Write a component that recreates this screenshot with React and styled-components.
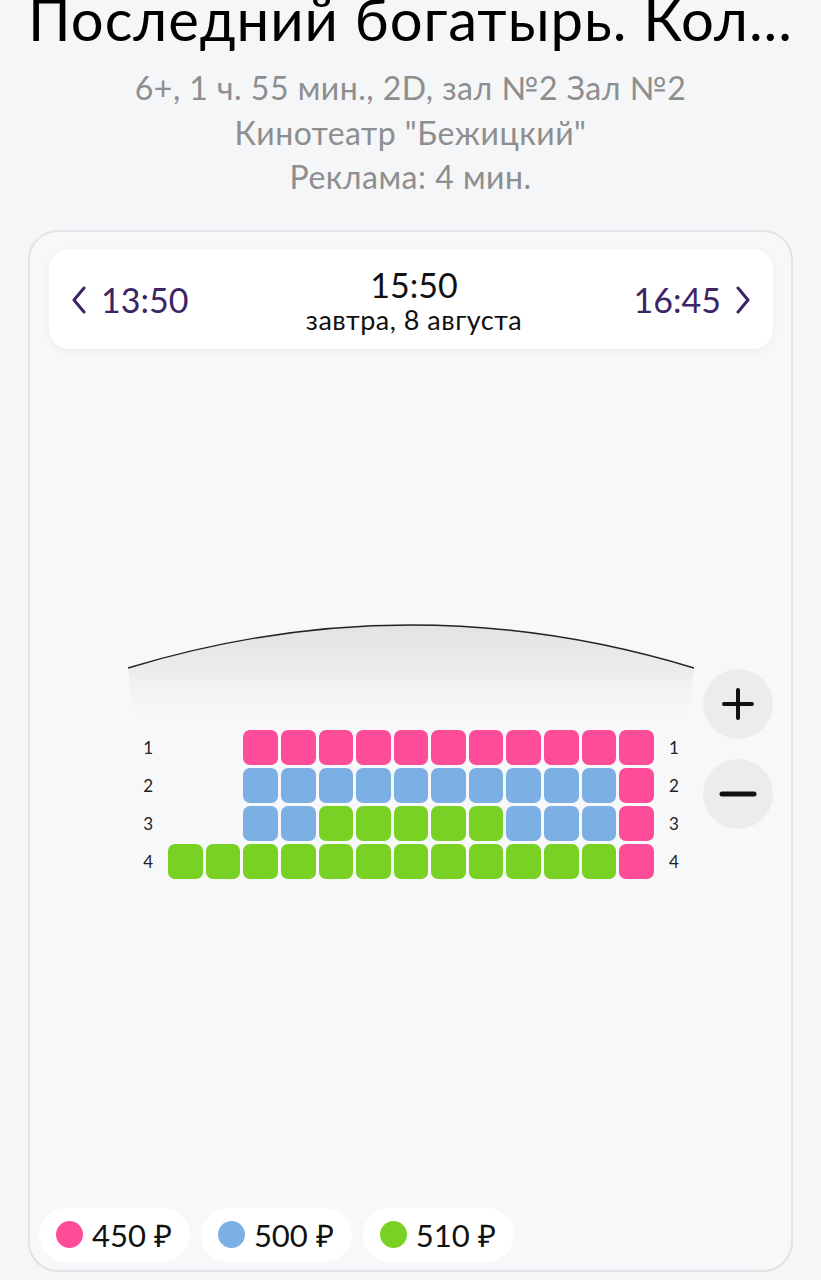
import React from 'react';
import styled, {createGlobalStyle} from 'styled-components';

const GlobalStyle = createGlobalStyle`
  body {
    margin: 0;
    background: #f5f6f8;
    font-family: Lato, "Open Sans", sans-serif;
  }
`;

const P = 'pink';
const B = 'blue';
const G = 'green';
const _ = null;

const rows = [
  [_, _, P, P, P, P, P, P, P, P, P, P, P],
  [_, _, B, B, B, B, B, B, B, B, B, B, P],
  [_, _, B, B, G, G, G, G, G, B, B, B, P],
  [G, G, G, G, G, G, G, G, G, G, G, G, P],
];

const colors = {
  pink: '#fd4d99',
  blue: '#7cafe3',
  green: '#79d123',
};

const prices = [
  {color: 'pink', label: '450 ₽'},
  {color: 'blue', label: '500 ₽'},
  {color: 'green', label: '510 ₽'},
];

const Chevron = ({dir}) => (
  <svg width="16" height="28" viewBox="0 0 16 28">
    <polyline
      points={dir === 'left' ? '13,2 3,14 13,26' : '3,2 13,14 3,26'}
      fill="none"
      stroke="#3d2465"
      strokeWidth="3"
      strokeLinecap="round"
      strokeLinejoin="round"
    />
  </svg>
);

// screen arc with the soft light falling down onto the hall
const ScreenShape = () => (
  <svg width="568" height="104" viewBox="0 0 568 104">
    <defs>
      <linearGradient id="glow" x1="0" y1="0" x2="0" y2="1">
        <stop offset="0" stopColor="#e2e3e5" />
        <stop offset="0.45" stopColor="#ebecee" />
        <stop offset="1" stopColor="#f7f8fa" stopOpacity="0" />
      </linearGradient>
    </defs>
    <path d="M1 44 Q284 -42 567 44 L560 104 L8 104 Z" fill="url(#glow)" />
    <path d="M1 44 Q284 -42 567 44" fill="none" stroke="#222" strokeWidth="1.4" />
  </svg>
);

const App = () => {
  return (
    <Page>
      <GlobalStyle />
      <Title>Последний богатырь. Кол...</Title>
      <Info>
        <div>6+, 1 ч. 55 мин., 2D, зал №2 Зал №2</div>
        <div>Кинотеатр "Бежицкий"</div>
        <div>Реклама: 4 мин.</div>
      </Info>
      <Card>
        <SessionNav>
          <SideTime>
            <Chevron dir="left" />
            13:50
          </SideTime>
          <Current>
            <CurrentTime>15:50</CurrentTime>
            <CurrentDate>завтра, 8 августа</CurrentDate>
          </Current>
          <SideTime>
            16:45
            <Chevron dir="right" />
          </SideTime>
        </SessionNav>

        <MapArea>
          <Stage>
            <ScreenShape />
            <Rows>
              {rows.map((row, i) => (
                <RowLine key={i}>
                  <RowNum>{i + 1}</RowNum>
                  <Seats>
                    {row.map((s, j) =>
                      s ? <Seat key={j} $color={colors[s]} /> : <Gap key={j} />
                    )}
                  </Seats>
                  <RowNum>{i + 1}</RowNum>
                </RowLine>
              ))}
            </Rows>
          </Stage>
          <Zoom>
            <ZoomButton>
              <svg width="34" height="34" viewBox="0 0 34 34">
                <path d="M17 3 V31 M3 17 H31" stroke="#111" strokeWidth="4" strokeLinecap="round" />
              </svg>
            </ZoomButton>
            <ZoomButton>
              <svg width="38" height="34" viewBox="0 0 38 34">
                <path d="M3 17 H35" stroke="#111" strokeWidth="5" strokeLinecap="round" />
              </svg>
            </ZoomButton>
          </Zoom>
        </MapArea>

        <Legend>
          {prices.map((p) => (
            <PricePill key={p.label}>
              <Dot $color={colors[p.color]} />
              {p.label}
            </PricePill>
          ))}
        </Legend>
      </Card>
    </Page>
  );
};
export default App;

const Page = styled.div`
  width: 821px;
  height: 1280px;
  overflow: hidden;
  box-sizing: border-box;
  padding: 0 28px;
`;

const Title = styled.h1`
  margin: -14px -28px 0;
  font-size: 58px;
  line-height: 66px;
  letter-spacing: 1px;
  font-weight: 400;
  color: #000;
  text-align: center;
  white-space: nowrap;
`;

const Info = styled.div`
  margin-top: 14px;
  font-size: 32px;
  line-height: 44.5px;
  letter-spacing: 0.5px;
  color: #8e8e8e;
  text-align: center;
`;

const Card = styled.div`
  margin-top: 30px;
  height: 1042px;
  box-sizing: border-box;
  border: 2px solid #e2e3e6;
  border-radius: 30px;
  background: #f7f8fa;
  padding: 17px 18px 8px 9px;
  display: flex;
  flex-direction: column;
`;

const SessionNav = styled.div`
  margin-left: 10px;
  height: 100px;
  background: #fff;
  border-radius: 20px;
  box-shadow: 0 2px 8px rgba(0, 0, 0, 0.05);
  display: flex;
  align-items: center;
  justify-content: space-between;
  padding: 0 22px;
`;

const SideTime = styled.div`
  display: flex;
  align-items: center;
  gap: 14px;
  font-size: 34px;
  color: #3d2465;
  padding-top: 2px;
`;

const Current = styled.div`
  display: flex;
  flex-direction: column;
  align-items: center;
  margin-left: 6px;
  padding-top: 4px;
`;

const CurrentTime = styled.div`
  font-size: 34px;
  line-height: 38px;
  color: #111;
`;

const CurrentDate = styled.div`
  font-size: 27px;
  line-height: 32px;
  letter-spacing: 0.5px;
  color: #111;
`;

const MapArea = styled.div`
  flex: 1;
  position: relative;
  display: flex;
  justify-content: center;
  padding-top: 275px;
  padding-left: 10px;
`;

const Stage = styled.div`
  display: flex;
  flex-direction: column;
  align-items: center;
`;

const Rows = styled.div`
  display: flex;
  flex-direction: column;
  gap: 3px;
  margin-top: 2px;
`;

const RowLine = styled.div`
  display: flex;
  align-items: center;
  gap: 10px;
`;

const RowNum = styled.div`
  width: 20px;
  text-align: center;
  font-size: 17px;
  color: #222;
`;

const Seats = styled.div`
  display: flex;
  gap: 3px;
`;

const Seat = styled.div`
  width: 34.6px;
  height: 35px;
  border-radius: 7px;
  background: ${(p) => p.$color};
`;

const Gap = styled.div`
  width: 34.6px;
  height: 35px;
`;

const Zoom = styled.div`
  position: absolute;
  right: 0;
  top: 320px;
  display: flex;
  flex-direction: column;
  gap: 20px;
`;

const ZoomButton = styled.div`
  width: 70px;
  height: 70px;
  border-radius: 50%;
  background: #ececee;
  display: flex;
  align-items: center;
  justify-content: center;
`;

const Legend = styled.div`
  display: flex;
  gap: 11px;
`;

const PricePill = styled.div`
  height: 54px;
  box-sizing: border-box;
  padding: 0 18px 0 17px;
  background: #fff;
  border-radius: 27px;
  display: flex;
  align-items: center;
  gap: 9px;
  font-size: 31px;
  color: #111;
`;

const Dot = styled.span`
  width: 27px;
  height: 27px;
  border-radius: 50%;
  background: ${(p) => p.$color};
`;
